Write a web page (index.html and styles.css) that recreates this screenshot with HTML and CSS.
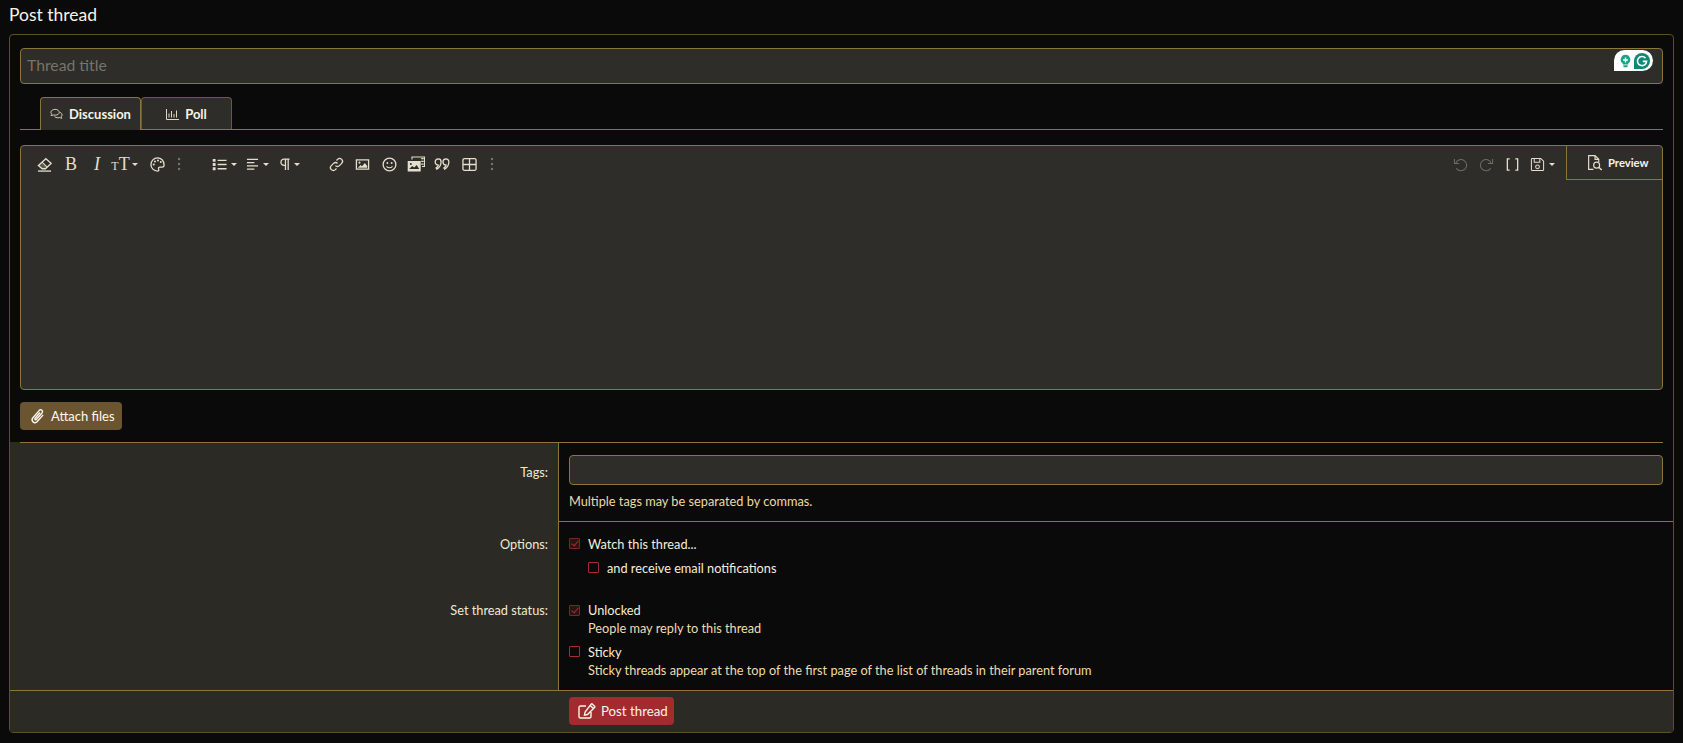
FILE: index.html
```html
<!DOCTYPE html>
<html lang="en">
<head>
<meta charset="utf-8">
<title>Post thread</title>
<link rel="stylesheet" href="styles.css">
</head>
<body>
<h1 class="page-title">Post thread</h1>
<form class="block">
  <div class="block-top">
    <div class="title-wrap">
      <input class="title-input" type="text" placeholder="Thread title">
      <div class="grammarly">
        <svg class="gr-bulb" viewBox="0 0 16 20" width="11" height="14"><path fill="#15a589" d="M8 1a7 7 0 0 0-4 12.700V15h8v-1.300A7 7 0 0 0 8 1z"/><path fill="#15a589" d="M5 16.300h6V18a1 1 0 0 1-1 1H6a1 1 0 0 1-1-1z"/><path fill="#fff" d="M7 5h2v2.500h2.500v2H9V12H7V9.500H4.500v-2H7z"/></svg>
        <svg class="gr-g" viewBox="0 0 20 20" width="16" height="16"><circle cx="10" cy="10" r="10" fill="#0e8a74"/><path fill="#0e8a74" d="M0 10h10v10H0z"/><path fill="none" stroke="#fff" stroke-width="2" d="M14.400 6.400A5.700 5.700 0 1 0 15.700 10.500H11"/></svg>
      </div>
    </div>
    <div class="tabs">
      <span class="tab tab-active">
        <svg class="tab-ico" viewBox="0 0 14 12" width="13" height="12"><path fill="none" stroke="currentColor" d="M5.500 1C3 1 1 2.400 1 4.200c0 .8.400 1.500 1 2-.1.600-.5 1.100-.9 1.500 1 0 1.800-.3 2.400-.7.700.2 1.300.3 2 .3C8 7.300 10 5.900 10 4.200S8 1 5.500 1z"/><path fill="none" stroke="currentColor" d="M10.800 4.300c1.300.5 2.200 1.500 2.200 2.700 0 .8-.4 1.500-1 2 .1.600.5 1.100.9 1.500-1 0-1.800-.3-2.400-.7-.7.200-1.300.3-2 .3-1.500 0-2.800-.5-3.600-1.300"/></svg>
        Discussion
      </span>
      <span class="tab">
        <svg class="tab-ico" viewBox="0 0 13 12" width="13" height="12"><path fill="none" stroke="currentColor" d="M.5 1v10.500H13M3 5.500V9.500M5.500 3V9.500M8 6V9.500M10.500 2.500V9.500"/></svg>
        Poll
      </span>
    </div>
    <div class="editor">
      <div class="toolbar">
        <span class="slot w26"><svg class="ico" viewBox="0 0 16 16"><path d="M9.500 1.800 15 6.800 9 12.500H5.500L1.500 9z" class="ln ln2"/><path class="dot" d="M1.800 9 5.600 5.600l5 5L9 12.200H5.600z" opacity=".25"/><path d="M5.500 5.500l5.300 5.200" class="ln"/><path d="M1 15h14" class="ln ln2"/></svg></span>
        <span class="slot w28"><span class="glyph">B</span></span>
        <span class="slot w24"><span class="glyph g-i">I</span></span>
        <span class="slot w31"><span class="g-size"><span class="small-t">T</span><span class="big-t">T</span><i class="caret"></i></span></span>
        <span class="slot w34"><svg class="ico" viewBox="0 0 16 16"><path class="ln ln2" d="M8 1a7 7 0 1 0 0 14c1.500 0 1.700-1 1.200-2-.5-1.200.2-2.300 1.500-2.300h2.500c1.200 0 1.800-.8 1.800-2.200C15 3.800 11.800 1 8 1z"/><circle cx="4" cy="8" r="1.100" class="dot"/><circle cx="5.300" cy="4.800" r="1.100" class="dot"/><circle cx="8.500" cy="3.700" r="1.100" class="dot"/><circle cx="11.500" cy="5.300" r="1.100" class="dot"/></svg></span>
        <span class="slot w10"><svg class="dots" viewBox="0 0 4 14"><circle cx="2" cy="2" r="1.200"/><circle cx="2" cy="7" r="1.200"/><circle cx="2" cy="12" r="1.200"/></svg></span>
        <span class="spacer s25"></span>
        <span class="slot w30"><span class="with-caret"><svg class="ico" viewBox="0 0 16 16"><path class="ln ln2" d="M6 3.500h9.500M6 8h9.500M6 12.500h9.500"/><path class="dot" d="M.8 2h3v3h-3zM.8 6.500h3v3h-3zM.8 11h3v3h-3z"/></svg><i class="caret"></i></span></span>
        <span class="slot w36"><span class="with-caret"><svg class="ico narrow" viewBox="0 0 14 16"><path class="ln ln2" d="M1 2.500h12M1 6h8M1 9.500h12M1 13h8"/></svg><i class="caret"></i></span></span>
        <span class="slot w29"><span class="with-caret"><svg class="ico para" viewBox="0 0 11 16"><path class="ln ln2" d="M10.500 2H4.500a3.500 3.500 0 0 0 0 7H6M6 2v12M9 2v12"/></svg><i class="caret"></i></span></span>
        <span class="spacer s19"></span>
        <span class="slot w26"><svg class="ico" viewBox="0 0 16 16"><path class="ln ln2" d="M6.800 9.200a3 3 0 0 0 4.300 0l2.400-2.400a3 3 0 0 0-4.300-4.300L8 3.800"/><path class="ln ln2" d="M9.200 6.800a3 3 0 0 0-4.300 0L2.500 9.200a3 3 0 0 0 4.300 4.300L8 12.200"/></svg></span>
        <span class="slot w26"><svg class="ico" viewBox="0 0 16 16"><path class="ln ln2" d="M1.500 3h13v10h-13z"/><circle cx="4.800" cy="6" r="1.100" class="dot"/><path class="dot" d="M3 11.500 6 8.500l1.500 1.300L10.500 6.500l2.500 3v2z"/></svg></span>
        <span class="slot w28"><svg class="ico" viewBox="0 0 16 16"><circle class="ln ln2" cx="8" cy="8" r="6.800"/><circle cx="5.700" cy="6.400" r="1" class="dot"/><circle cx="10.300" cy="6.400" r="1" class="dot"/><path class="ln" d="M4.800 10c1.700 2 4.700 2 6.400 0"/></svg></span>
        <span class="slot w25"><svg class="ico-wide" viewBox="0 0 18 16"><path class="ln" d="M5 3.500V1h12.500v9.500H15"/><path class="dot" d="M14.200 2h2.500v1.300h-2.500zM14.200 4.800h2.500v1.300h-2.500zM14.200 7.500h2.500v1.300h-2.500z"/><path class="fill-box" d="M.7 5h13v10.500H.7z"/><path class="cut" d="M2.200 13 5.200 10l2 1.500 2.500-2.500 2.500 4z"/><circle cx="3.800" cy="8" r="1" class="cut"/></svg></span>
        <span class="slot w28"><svg class="ico-q" viewBox="0 0 17 16"><path class="ln ln2" d="M4.500 2a3 3 0 0 1 3 3c0 3.700-2 6.500-4.500 8l-.8-1.300c1.300-.9 2.100-1.900 2.400-3.100A3 3 0 1 1 4.500 2z"/><path class="ln ln2" d="M12.800 2a3 3 0 0 1 3 3c0 3.700-2 6.500-4.500 8l-.8-1.300c1.300-.9 2.100-1.900 2.400-3.100A3 3 0 1 1 12.800 2z"/></svg></span>
        <span class="slot w26"><svg class="ico" viewBox="0 0 16 16"><path class="ln ln2" d="M2.500 1.800h11A1.500 1.500 0 0 1 15 3.300v9.400a1.500 1.500 0 0 1-1.500 1.500h-11A1.500 1.500 0 0 1 1 12.700V3.300a1.500 1.500 0 0 1 1.500-1.500zM1 8h14M8 1.800v12.400"/></svg></span>
        <span class="spacer s5"></span>
        <span class="slot w10"><svg class="dots" viewBox="0 0 4 14"><circle cx="2" cy="2" r="1.200"/><circle cx="2" cy="7" r="1.200"/><circle cx="2" cy="12" r="1.200"/></svg></span>
        <div class="tb-right">
          <svg class="ico muted" viewBox="0 0 16 16"><path class="ln" d="M3 6.500A6 6 0 1 1 3.500 12M1.500 2v5h5"/></svg>
          <svg class="ico muted" viewBox="0 0 16 16"><path class="ln" d="M13 6.500A6 6 0 1 0 12.500 12M14.500 2v5h-5"/></svg>
          <svg class="ico" viewBox="0 0 16 16"><path class="ln ln2" d="M5 2H2.500v12H5M11 2h2.500v12H11"/></svg>
          <span class="with-caret save"><svg class="ico" viewBox="0 0 16 16"><path class="ln" d="M2.500 1.500h9l3 3v9a1 1 0 0 1-1 1h-11a1 1 0 0 1-1-1v-11a1 1 0 0 1 1-1zM4.500 1.500v4h6v-4"/><circle class="ln" cx="8" cy="10.500" r="2"/></svg><i class="caret"></i></span>
          <span class="preview">
            <svg class="ico-p" viewBox="0 0 16 16"><path class="ln" d="M7 14.500H2.500v-13h6l3.500 3.500v2.500M8.500 1.500V5H12"/><circle class="ln" cx="10" cy="10.500" r="2.800"/><path class="ln ln2" d="m12 12.500 2.800 2.500"/></svg>
            Preview
          </span>
        </div>
      </div>
    </div>
    <button class="btn-attach" type="button">
      <svg viewBox="0 0 14 16" width="15" height="17"><path fill="none" stroke="currentColor" stroke-width="1.300" d="M12.300 6.500 6.600 13a2.600 2.600 0 0 1-3.900-.1c-1-1.100-1-2.700 0-3.800l6-6.900a1.700 1.700 0 0 1 2.500 0c.7.700.7 1.800 0 2.500l-5.300 6.100a.8.800 0 0 1-1.200 0 .9.900 0 0 1 0-1.200L9.300 4.200"/></svg>
      Attach files
    </button>
  </div>
  <div class="form-rows">
    <div class="form-row row-tags">
      <div class="row-label row-label-tags">Tags:</div>
      <div class="row-body">
        <input class="tags-input" type="text">
        <div class="explain">Multiple tags may be separated by commas.</div>
      </div>
    </div>
    <div class="form-row row-last">
      <div class="labels-col">
        <div class="row-label label-options">Options:</div>
        <div class="row-label label-status">Set thread status:</div>
      </div>
      <div class="row-body body-options">
        <div class="check"><i class="box on"></i><span>Watch this thread...</span></div>
        <div class="check check-sub"><i class="box"></i><span>and receive email notifications</span></div>
        <div class="check check-status"><i class="box on"></i><div><div>Unlocked</div><div class="explain-check">People may reply to this thread</div></div></div>
        <div class="check check-sticky"><i class="box"></i><div><div>Sticky</div><div class="explain-check">Sticky threads appear at the top of the first page of the list of threads in their parent forum</div></div></div>
      </div>
    </div>
    <div class="form-footer">
      <button class="btn-post" type="button">
        <svg viewBox="0 0 18 16" width="18" height="16"><path fill="none" stroke="currentColor" stroke-width="1.400" d="M8 3H2.500A1.500 1.500 0 0 0 1 4.500v9A1.500 1.500 0 0 0 2.500 15h9a1.500 1.500 0 0 0 1.500-1.500V9"/><path fill="none" stroke="currentColor" stroke-width="1.400" d="M14.500 1.200 16.500 3.200a1 1 0 0 1 0 1.400L9.500 11.500l-3 .6.600-3 6-7.900a1 1 0 0 1 1.400 0zM12.500 2.800l2.800 2.800"/></svg>
        Post thread
      </button>
    </div>
  </div>
</form>
</body>
</html>
```

FILE: styles.css
```css
* { box-sizing: border-box; }
html, body { margin: 0; padding: 0; }
body {
  background: #0a0a0a;
  color: #f5eeda;
  font-family: Lato, "Noto Sans", sans-serif;
  font-size: 12.750px;
  height: 743px;
  overflow: hidden;
  padding: 0 9px;
}
.page-title {
  margin: 0;
  height: 34px;
  padding-top: 4px;
  font-size: 17.500px;
  font-weight: 400;
  line-height: 22px;
  color: #f8f4e6;
}
.block {
  border: 1px solid #5f4f28;
  border-radius: 4px;
  height: 699px;
  display: flex;
  flex-direction: column;
}
.block-top { padding: 13px 10px 0; height: 407px; }
.title-wrap { position: relative; }
.title-input {
  display: block;
  width: 100%;
  height: 36px;
  background: #2e2d29;
  border: 1px solid #8c7538;
  border-radius: 4px;
  padding: 0 6px 3px;
  font: 400 15.750px Lato, sans-serif;
  color: #f3ecd6;
  outline: none;
}
.title-input::placeholder { color: #77746a; opacity: 1; }
.grammarly {
  position: absolute;
  top: 2px;
  right: 10px;
  width: 39px;
  height: 21px;
  background: #fff;
  border-radius: 11px 11px 11px 0;
  display: flex;
  align-items: center;
  justify-content: space-between;
  padding: 0 3px 0 6px;
}
.tabs {
  display: flex;
  align-items: flex-start;
  padding-left: 20px;
  margin-top: 13px;
  height: 33px;
  border-bottom: 1px solid #8c7538;
}
.tab {
  display: flex;
  align-items: center;
  justify-content: center;
  gap: 6px;
  height: 32px;
  background: #2e2d29;
  border: 1px solid #6d5c30;
  border-bottom: 0;
  border-radius: 4px 4px 0 0;
  font-weight: 700;
  font-size: 13px;
  color: #f7f3e6;
  width: 91px;
}
.tab-active { width: 101px; border-color: #8c7538; height: 33px; }
.tab-ico { color: #ddd8c4; flex: none; }
.editor {
  margin-top: 15px;
  height: 245px;
  background: #2e2d29;
  border: 1px solid #8c7538;
  border-radius: 4px;
}
.toolbar { display: flex; align-items: center; height: 36px; padding-left: 10px; }
.slot { display: flex; align-items: center; justify-content: center; height: 36px; flex: none; }
.w10 { width: 10px; }
.w24 { width: 24px; }
.w25 { width: 25px; }
.w26 { width: 26px; }
.w28 { width: 28px; }
.w29 { width: 29px; }
.w30 { width: 30px; }
.w31 { width: 31px; }
.w34 { width: 34px; }
.w36 { width: 36px; }
.spacer { flex: none; }
.s5 { width: 5px; }
.s19 { width: 19px; }
.s25 { width: 25px; }
.ico { width: 15px; height: 15px; flex: none; display: block; }
.ico.narrow { width: 13px; }
.ico.para { width: 10px; }
.ico-wide { width: 18px; height: 16px; flex: none; display: block; }
.ico-q { width: 16px; height: 15px; flex: none; display: block; }
.ico-p { width: 17px; height: 17px; flex: none; display: block; }
.ln { fill: none; stroke: #e3dfcc; stroke-width: 1.100; }
.ln2 { stroke-width: 1.400; }
.dot { fill: #e3dfcc; stroke: none; }
.fill-box { fill: #e3dfcc; }
.cut { fill: #2e2d29; }
.muted .ln { stroke: #6f6d63; }
.dots { width: 4px; height: 14px; fill: #77746a; flex: none; }
.glyph { font-family: "Liberation Serif", serif; font-size: 18px; line-height: 1; color: #e3dfcc; }
.g-i { font-style: italic; }
.g-size { display: inline-flex; align-items: baseline; font-family: "Liberation Serif", serif; color: #e3dfcc; line-height: 1; }
.small-t { font-size: 12px; }
.big-t { font-size: 18px; }
.g-size .caret { align-self: center; margin-left: 2px; }
.with-caret { display: inline-flex; align-items: center; gap: 4px; }
.caret {
  display: inline-block;
  width: 0;
  height: 0;
  border-left: 3px solid transparent;
  border-right: 3px solid transparent;
  border-top: 3px solid #e3dfcc;
}
.tb-right { margin-left: auto; display: flex; align-items: center; height: 36px; gap: 11px; }
.save { margin-left: -1px; }
.preview {
  display: flex;
  align-items: center;
  gap: 5px;
  width: 96px;
  height: 34px;
  padding-left: 19px;
  border-left: 1px solid #8c7538;
  border-bottom: 1px solid #8c7538;
  font-weight: 700;
  font-size: 11.250px;
  color: #f7f3e6;
  align-self: flex-start;
}
.btn-attach {
  display: flex;
  align-items: center;
  gap: 6px;
  margin-top: 12px;
  width: 102px;
  height: 28px;
  padding: 0 0 0 10px;
  background: #6b5531;
  border: 0;
  border-radius: 4px;
  color: #fbf8ef;
  font: 400 13px Lato, sans-serif;
}
.form-rows { display: flex; flex-direction: column; flex: 1; }
.form-row {
  display: grid;
  grid-template-columns: 548px 1fr;
  position: relative;
}
.row-tags { height: 79px; }
.row-tags::before {
  content: "";
  position: absolute;
  left: 10px;
  right: 10px;
  top: 0;
  height: 1px;
  background: #8c7538;
  z-index: 1;
}
.row-label { text-align: right; padding-right: 10px; background: #2b2a25; color: #f0e9d2; line-height: 18px; }
.row-label-tags { padding-top: 21px; }
.labels-col { background: #2b2a25; display: flex; flex-direction: column; }
.label-options { padding-top: 14px; height: 80px; }
.row-body { border-left: 1px solid #8c7538; padding: 13px 10px 0; }
.tags-input {
  display: block;
  width: 100%;
  height: 30px;
  background: #2e2d29;
  border: 1px solid #8c7538;
  border-radius: 4px;
  outline: none;
}
.explain { margin-top: 7px; line-height: 18px; color: #ecd9aa; }
.row-last { flex: 1; }
.body-options { border-top: 1px solid #8c7538; padding-top: 13px; }
.check { display: flex; gap: 8px; align-items: flex-start; line-height: 18px; color: #f5eeda; }
.box {
  display: block;
  flex: none;
  width: 11px;
  height: 11px;
  margin-top: 3px;
  border: 1px solid #a52c30;
  border-radius: 1px;
  position: relative;
}
.box.on { background: #2a1513; border-color: #7c2527; }
.box.on::after {
  content: "";
  position: absolute;
  left: 3px;
  top: 0;
  width: 3px;
  height: 6px;
  border: solid #a52c30;
  border-width: 0 1px 1px 0;
  transform: rotate(40deg);
}
.check-sub { margin-top: 6px; margin-left: 19px; }
.check-status { margin-top: 24px; }
.check-status .box { margin-top: 4px; }
.check-sticky { margin-top: 6px; }
.explain-check { color: #eedcae; }
.form-footer {
  height: 42px;
  border-top: 1px solid #8c7538;
  background: #2b2a25;
  padding: 6px 0 0 559px;
}
.btn-post {
  display: flex;
  align-items: center;
  gap: 5px;
  width: 105px;
  height: 28px;
  padding: 0 0 0 9px;
  background: #a12c30;
  border: 0;
  border-radius: 4px;
  color: #fbf4e8;
  font: 400 13.250px Lato, sans-serif;
}
```
